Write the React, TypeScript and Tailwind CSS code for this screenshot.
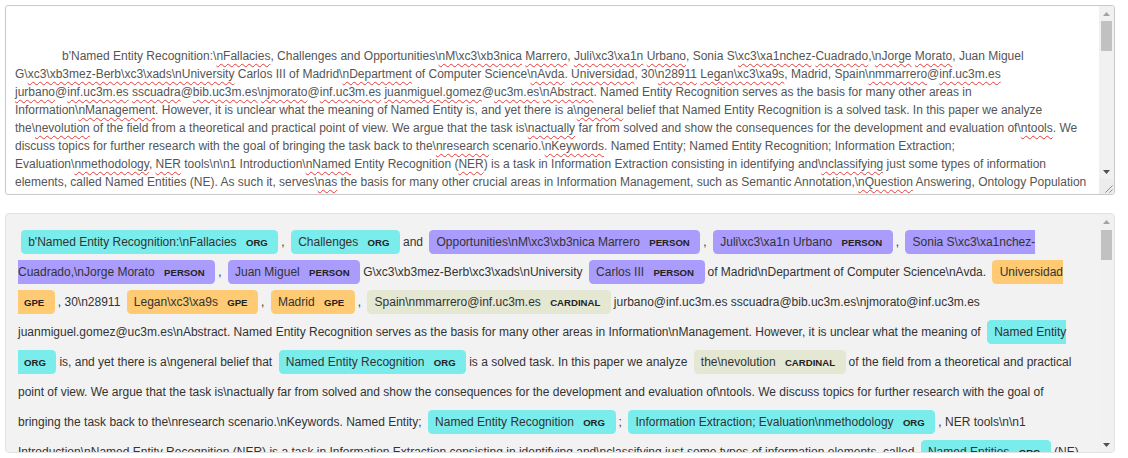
import React from 'react'

const r = String.raw

// text in the top box, one entry per visual line; {..} = spellcheck squiggle
const topLines = [
  r`b'Named Entity Recognition:\{nFallacies}, Challenges and Opportunities\{nM\xc3\xb3nica} {Marrero}, {Juli\xc3\xa1n} {Urbano}, Sonia S\{xc3\xa1nchez}-{Cuadrado},\{nJorge} {Morato}, Juan Miguel`,
  r`G\{xc3\xb3mez-Berb\xc3\xads\nUniversity} Carlos III of Madrid\{nDepartment} of Computer Science\{nAvda}. {Universidad}, 30\{n28911} {Legan\xc3\xa9s}, Madrid, Spain\{nmmarrero}@{inf.uc3m.es}`,
  r`{jurbano}@{inf.uc3m.es} {sscuadra}@{bib.uc3m.es}\{njmorato}@{inf.uc3m.es} {juanmiguel.gomez}@{uc3m.es}\{nAbstract}. Named Entity Recognition serves as the basis for many other areas in`,
  r`Information\{nManagement}. However, it is unclear what the meaning of Named Entity is, and yet there is a\{ngeneral} belief that Named Entity Recognition is a solved task. In this paper we analyze`,
  r`the\{nevolution} of the field from a theoretical and practical point of view. We argue that the task is\{nactually} far from solved and show the consequences for the development and evaluation of\{ntools}. We`,
  r`discuss topics for further research with the goal of bringing the task back to the\{nresearch} scenario.\{nKeywords}. Named Entity; Named Entity Recognition; Information Extraction;`,
  r`Evaluation\{nmethodology}, {NER} tools\n\n1 Introduction\{nNamed} Entity Recognition ({NER}) is a task in Information Extraction consisting in identifying and\{nclassifying} just some types of information`,
  r`elements, called Named Entities (NE). As such it, serves\{nas} the basis for many other crucial areas in Information Management, such as Semantic Annotation,\{nQuestion} Answering, Ontology Population`,
]

type Ent = { t: string; l: string; p?: 's' | 'e' }
type Seg = string | Ent
const E = (t: string, l: string, p?: 's' | 'e'): Ent => ({ t, l, p })

const bottomLines: Seg[][] = [
  [E(r`b'Named Entity Recognition:\nFallacies`, 'ORG'), ', ', E('Challenges', 'ORG'), 'and ', E(r`Opportunities\nM\xc3\xb3nica Marrero`, 'PERSON'), ', ', E(r`Juli\xc3\xa1n Urbano`, 'PERSON'), ', ', E(r`Sonia S\xc3\xa1nchez-`, 'PERSON', 's')],
  [E(r`Cuadrado,\nJorge Morato`, 'PERSON', 'e'), ', ', E('Juan Miguel', 'PERSON'), r`G\xc3\xb3mez-Berb\xc3\xads\nUniversity `, E('Carlos III', 'PERSON'), r`of Madrid\nDepartment of Computer Science\nAvda. `, E('Universidad', 'GPE', 's')],
  [E('', 'GPE', 'e'), r`, 30\n28911 `, E(r`Legan\xc3\xa9s`, 'GPE'), ', ', E('Madrid', 'GPE'), ', ', E(r`Spain\nmmarrero@inf.uc3m.es`, 'CARDINAL'), r`jurbano@inf.uc3m.es sscuadra@bib.uc3m.es\njmorato@inf.uc3m.es`],
  [r`juanmiguel.gomez@uc3m.es\nAbstract. Named Entity Recognition serves as the basis for many other areas in Information\nManagement. However, it is unclear what the meaning of `, E('Named Entity', 'ORG', 's')],
  [E('', 'ORG', 'e'), r`is, and yet there is a\ngeneral belief that `, E('Named Entity Recognition', 'ORG'), 'is a solved task. In this paper we analyze ', E(r`the\nevolution`, 'CARDINAL'), 'of the field from a theoretical and practical'],
  [r`point of view. We argue that the task is\nactually far from solved and show the consequences for the development and evaluation of\ntools. We discuss topics for further research with the goal of`],
  [r`bringing the task back to the\nresearch scenario.\nKeywords. Named Entity; `, E('Named Entity Recognition', 'ORG'), '; ', E(r`Information Extraction; Evaluation\nmethodology`, 'ORG'), r`, NER tools\n\n1`],
  [r`Introduction\nNamed Entity Recognition (NER) is a task in Information Extraction consisting in identifying and\nclassifying just some types of information elements, called `, E('Named Entities', 'ORG'), '(NE)'],
]

const BG: Record<string, string> = {
  ORG: 'bg-[#7aecec]',
  PERSON: 'bg-[#aa9cfc]',
  GPE: 'bg-[#feca74]',
  CARDINAL: 'bg-[#e4e7d2]',
}

const Spell = ({ text }: { text: string }) => {
  const parts = text.split(/(\{[^}]*\})/)
  return (
    <>
      {parts.map((p, i) =>
        p.startsWith('{') ? (
          <span key={i} className="underline decoration-wavy decoration-[#e53b3b] decoration-1 underline-offset-[3px]">
            {p.slice(1, -1)}
          </span>
        ) : (
          <React.Fragment key={i}>{p}</React.Fragment>
        )
      )}
    </>
  )
}

const Mark = ({ t, l, p }: Ent) => {
  const shape =
    p === 's'
      ? 'rounded-l-[0.35em] pl-[0.6em] ml-[0.25em]'
      : p === 'e'
      ? 'rounded-r-[0.35em] pr-[0.6em] mr-[0.25em]'
      : 'rounded-[0.35em] px-[0.6em] mx-[0.25em]'
  return (
    <mark className={`${BG[l]} ${shape} py-[0.45em] leading-none text-[#333]`}>
      {t}
      {p !== 's' && (
        <>
          {t && ' '}
          <span className="ml-[6px] align-middle text-[0.8em] font-bold leading-none uppercase text-[#222]">
            {l}
          </span>{' '}
        </>
      )}
    </mark>
  )
}

const Arrow = ({ dir, dark }: { dir: 'up' | 'down'; dark?: boolean }) => (
  <div className="h-[15px] flex items-center justify-center shrink-0">
    <svg width="7" height="4" viewBox="0 0 7 4" className={dark ? 'fill-[#505050]' : 'fill-[#a3a3a3]'}>
      <path d={dir === 'up' ? 'M0 4 L3.5 0 L7 4 Z' : 'M0 0 L7 0 L3.5 4 Z'} />
    </svg>
  </div>
)

const Scrollbar = ({ resizer, gap }: { resizer?: boolean; gap?: boolean }) => (
  <div className="w-[15px] shrink-0 bg-[#f1f1f1] flex flex-col">
    <Arrow dir="up" />
    <div className="flex-1">
      <div className={`${gap ? 'mt-px' : ''} mx-[2px] h-[30px] bg-[#c1c1c1]`} />
    </div>
    <Arrow dir="down" dark />
    {resizer && (
      <div className="h-[15px] shrink-0 bg-[#ececec]">
        <svg width="15" height="15" viewBox="0 0 15 15" className="stroke-[#8c8c8c]">
          <path d="M13.5 6.5 L6.5 13.5 M13.5 10.5 L10.5 13.5" strokeWidth="1" fill="none" />
        </svg>
      </div>
    )}
  </div>
)

export default function App() {
  return (
    <div className="w-[1128px] h-[458px] bg-white overflow-hidden font-['Liberation_Sans',Arial,sans-serif] text-[12px]">
      <div className="ml-[5px] mt-[5px] w-[1110px] h-[190px] border border-[#c9c9c9] rounded-[3px] bg-white flex overflow-hidden">
        <div className="flex-1 overflow-hidden pl-[9px] pt-[41px] leading-[18px] text-[#555]">
          {topLines.map((line, i) => (
            <div key={i} className={`whitespace-nowrap ${i === 0 ? 'pl-[47px]' : ''}`}>
              <Spell text={line} />
            </div>
          ))}
        </div>
        <Scrollbar resizer />
      </div>

      <div className="ml-[5px] mt-[18px] w-[1110px] h-[240px] border border-[#e2e2e2] rounded-[4px] bg-[#f2f2f2] flex overflow-hidden">
        <div className="flex-1 overflow-hidden pl-[12px] pt-[13px] text-[#333]">
          {bottomLines.map((line, i) => (
            <div key={i} className="whitespace-nowrap h-[30px] leading-[30px]">
              {line.map((s, j) =>
                typeof s === 'string' ? <React.Fragment key={j}>{s}</React.Fragment> : <Mark key={j} {...s} />
              )}
            </div>
          ))}
        </div>
        <Scrollbar gap />
      </div>
    </div>
  )
}
